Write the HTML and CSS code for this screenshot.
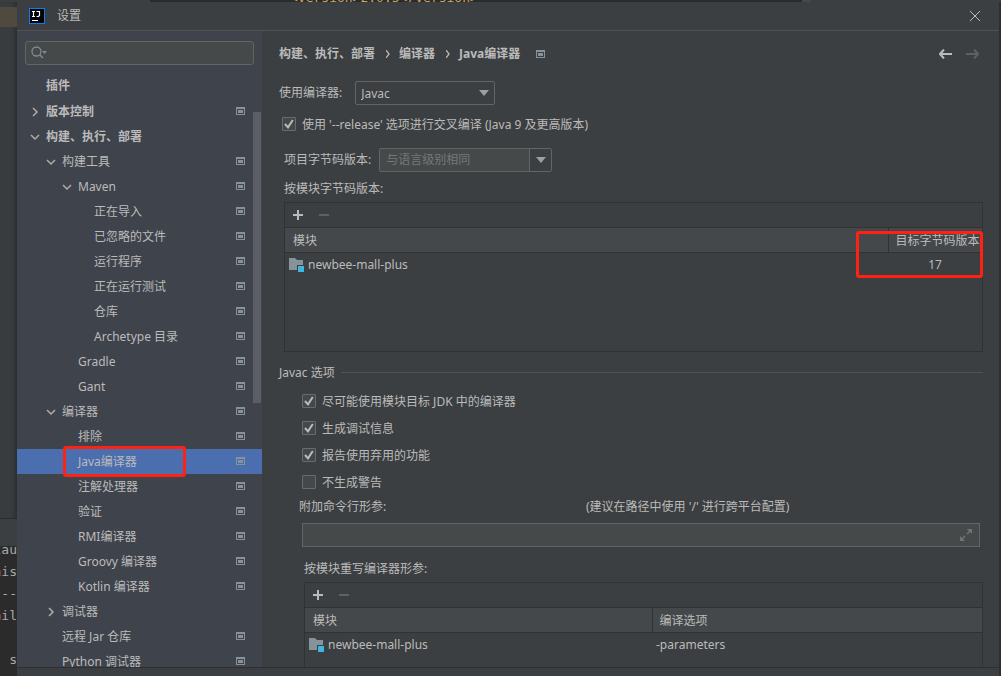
FILE: index.html
```html
<!DOCTYPE html>
<html lang="zh-CN">
<head>
<meta charset="utf-8">
<meta name="viewport" content="width=device-width, initial-scale=1">
<title>设置</title>
<link rel="stylesheet" href="styles.css">
</head>
<body>
<svg class="defs" aria-hidden="true">
  <symbol id="project" viewBox="0 0 9 8"><path fill-rule="evenodd" d="M0 0h9v8H0zM1 2v5h7V2zM2 3h5v3H2z"/></symbol>
  <symbol id="down" viewBox="0 0 16 16"><path d="M4 6l4 4 4-4" fill="none" stroke="currentColor" stroke-width="1.5"/></symbol>
  <symbol id="right" viewBox="0 0 16 16"><path d="M6 4l4 4-4 4" fill="none" stroke="currentColor" stroke-width="1.5"/></symbol>
  <symbol id="tick" viewBox="0 0 14 14"><path d="M3 7l3 3.4L10.8 3" fill="none" stroke="currentColor" stroke-width="2"/></symbol>
  <symbol id="arrow" viewBox="0 0 10 6"><path d="M0 0h10L5 6z"/></symbol>
  <symbol id="plus" viewBox="0 0 10 10"><path d="M4 0h2v4h4v2H6v4H4V6H0V4h4z"/></symbol>
  <symbol id="minus" viewBox="0 0 10 10"><path d="M0 4h10v2H0z"/></symbol>
  <symbol id="module" viewBox="0 0 16 14"><path d="M0 0h6l2 2h6v5H8v5H0z" fill="#87939a"/><path d="M9 8h6v6H9z" fill="#40b6e0"/></symbol>
</svg>
<div class="topstrip" aria-hidden="true"><span class="toptext">&lt;version&gt;2.0.5&lt;/version&gt;</span></div>
<div class="desktop">
  <div class="editor" aria-hidden="true">
    <div class="tab"></div>
    <div class="tool"></div>
    <div class="console"><p>tau</p><p><i>n</i>is</p><p>---</p><p><i>a</i>il</p><p>&nbsp;</p><p><i>)</i> s</p></div>
  </div>
  <div class="dialog" role="dialog" aria-labelledby="title">
    <header class="titlebar">
      <svg class="logo" viewBox="0 0 16 16" aria-hidden="true"><path fill="#087cfa" d="M0 0h16v16H0z"/><path fill="#000" d="M1 1h14v14H1z"/><path d="M3 3.5h3M4.500 3.500v5M3 8.500h3M7.500 3.500h3v4l-1 1H7.500M3 12.500h6" fill="none" stroke="#fff" stroke-width="1.200"/></svg>
      <h1 id="title">设置</h1>
      <button class="close" aria-label="关闭"><svg viewBox="0 0 10 10"><path d="M0 0l10 10M10 0L0 10" stroke="currentColor"/></svg></button>
    </header>
    <div class="content">
      <nav class="sidebar">
        <div class="search">
          <svg class="glass" viewBox="0 0 17 14" aria-hidden="true"><circle cx="5.500" cy="5.500" r="4.500" fill="none" stroke="currentColor" stroke-width="1.300"/><path d="M9 9l3 3" stroke="currentColor" stroke-width="1.500"/><path d="M11 5h5l-2.500 3z" fill="currentColor"/></svg>
          <input type="text" aria-label="搜索">
        </div>
        <ul class="tree">
          <li class="row l0 first bold"><i class="tw"></i><span>插件</span></li>
          <li class="row l0 bold"><svg class="tw"><use href="#right"/></svg><span>版本控制</span><svg class="pj"><use href="#project"/></svg></li>
          <li class="row l0 bold"><svg class="tw"><use href="#down"/></svg><span>构建、执行、部署</span></li>
          <li class="row l1"><svg class="tw"><use href="#down"/></svg><span>构建工具</span><svg class="pj"><use href="#project"/></svg></li>
          <li class="row l2"><svg class="tw"><use href="#down"/></svg><span>Maven</span><svg class="pj"><use href="#project"/></svg></li>
          <li class="row l3"><i class="tw"></i><span>正在导入</span><svg class="pj"><use href="#project"/></svg></li>
          <li class="row l3"><i class="tw"></i><span>已忽略的文件</span><svg class="pj"><use href="#project"/></svg></li>
          <li class="row l3"><i class="tw"></i><span>运行程序</span><svg class="pj"><use href="#project"/></svg></li>
          <li class="row l3"><i class="tw"></i><span>正在运行测试</span><svg class="pj"><use href="#project"/></svg></li>
          <li class="row l3"><i class="tw"></i><span>仓库</span><svg class="pj"><use href="#project"/></svg></li>
          <li class="row l3"><i class="tw"></i><span>Archetype 目录</span><svg class="pj"><use href="#project"/></svg></li>
          <li class="row l2"><i class="tw"></i><span>Gradle</span><svg class="pj"><use href="#project"/></svg></li>
          <li class="row l2"><i class="tw"></i><span>Gant</span><svg class="pj"><use href="#project"/></svg></li>
          <li class="row l1"><svg class="tw"><use href="#down"/></svg><span>编译器</span><svg class="pj"><use href="#project"/></svg></li>
          <li class="row l2"><i class="tw"></i><span>排除</span><svg class="pj"><use href="#project"/></svg></li>
          <li class="row l2 selected"><i class="tw"></i><span>Java编译器</span><svg class="pj"><use href="#project"/></svg><b class="mark mark-tree"></b></li>
          <li class="row l2"><i class="tw"></i><span>注解处理器</span><svg class="pj"><use href="#project"/></svg></li>
          <li class="row l2"><i class="tw"></i><span>验证</span><svg class="pj"><use href="#project"/></svg></li>
          <li class="row l2"><i class="tw"></i><span>RMI编译器</span><svg class="pj"><use href="#project"/></svg></li>
          <li class="row l2"><i class="tw"></i><span>Groovy 编译器</span><svg class="pj"><use href="#project"/></svg></li>
          <li class="row l2"><i class="tw"></i><span>Kotlin 编译器</span><svg class="pj"><use href="#project"/></svg></li>
          <li class="row l1"><svg class="tw"><use href="#right"/></svg><span>调试器</span></li>
          <li class="row l1"><i class="tw"></i><span>远程 Jar 仓库</span><svg class="pj"><use href="#project"/></svg></li>
          <li class="row l1"><i class="tw"></i><span>Python 调试器</span><svg class="pj"><use href="#project"/></svg></li>
        </ul>
        <div class="scrollbar"></div>
      </nav>
      <main class="page">
        <div class="crumbs">
          <span>构建、执行、部署</span>
          <svg class="sep" viewBox="0 0 4 8"><path d="M0 0l3 4-3 4" fill="none" stroke="currentColor" stroke-width="1.300"/></svg>
          <span>编译器</span>
          <svg class="sep" viewBox="0 0 4 8"><path d="M0 0l3 4-3 4" fill="none" stroke="currentColor" stroke-width="1.300"/></svg>
          <span>Java编译器</span>
          <svg class="pj"><use href="#project"/></svg>
          <div class="history">
            <button aria-label="后退"><svg viewBox="0 0 13 10"><path d="M13 5H1M5 .5L1 5l4 4.500" fill="none" stroke="currentColor" stroke-width="2"/></svg></button>
            <button aria-label="前进" disabled><svg viewBox="0 0 13 10"><path d="M0 5h12M8 .5L12 5 8 9.500" fill="none" stroke="currentColor" stroke-width="2"/></svg></button>
          </div>
        </div>
        <div class="field compiler">
          <label for="compiler">使用编译器:</label>
          <div class="select"><select id="compiler"><option>Javac</option></select><svg class="caret"><use href="#arrow"/></svg></div>
        </div>
        <label class="check cross"><span class="box"><input type="checkbox" checked><svg><use href="#tick"/></svg></span>使用 '--release' 选项进行交叉编译 (Java 9 及更高版本)</label>
        <section class="bytecode">
          <div class="field">
            <label for="level">项目字节码版本:</label>
            <div class="combo"><input id="level" type="text" placeholder="与语言级别相同"><button aria-label="展开"><svg class="caret"><use href="#arrow"/></svg></button></div>
          </div>
          <h2>按模块字节码版本:</h2>
          <div class="panel targets">
            <div class="toolbar"><button aria-label="添加"><svg><use href="#plus"/></svg></button><button aria-label="移除" disabled><svg><use href="#minus"/></svg></button></div>
            <table>
              <colgroup><col><col class="target"></colgroup>
              <thead><tr><th>模块</th><th>目标字节码版本</th></tr></thead>
              <tbody><tr><td><div class="module"><svg><use href="#module"/></svg>newbee-mall-plus</div></td><td class="num">17</td></tr></tbody>
            </table>
            <b class="mark mark-table"></b>
          </div>
        </section>
        <section>
          <h2 class="group">Javac 选项</h2>
          <div class="options">
            <label class="check"><span class="box"><input type="checkbox" checked><svg><use href="#tick"/></svg></span>尽可能使用模块目标 JDK 中的编译器</label>
            <label class="check"><span class="box"><input type="checkbox" checked><svg><use href="#tick"/></svg></span>生成调试信息</label>
            <label class="check"><span class="box"><input type="checkbox" checked><svg><use href="#tick"/></svg></span>报告使用弃用的功能</label>
            <label class="check"><span class="box"><input type="checkbox"><svg><use href="#tick"/></svg></span>不生成警告</label>
          </div>
          <div class="argline"><label for="args">附加命令行形参:</label><span>(建议在路径中使用 '/' 进行跨平台配置)</span></div>
          <div class="args">
            <input id="args" type="text">
            <svg viewBox="0 0 12 12" aria-hidden="true"><path d="M7 0h5v5l-2-2-2.500 2.500-1-1L9 2zM0 7l2 2 2.500-2.500 1 1L3 10l2 2H0z"/></svg>
          </div>
          <div class="override">
            <h2>按模块重写编译器形参:</h2>
            <div class="panel">
              <div class="toolbar"><button aria-label="添加"><svg><use href="#plus"/></svg></button><button aria-label="移除" disabled><svg><use href="#minus"/></svg></button></div>
              <table>
                <colgroup><col class="names"><col></colgroup>
                <thead><tr><th>模块</th><th>编译选项</th></tr></thead>
                <tbody><tr><td><div class="module"><svg><use href="#module"/></svg>newbee-mall-plus</div></td><td>-parameters</td></tr></tbody>
              </table>
            </div>
          </div>
        </section>
      </main>
    </div>
    <footer class="footer"></footer>
  </div>
  <div class="edge"></div>
</div>
</body>
</html>
```
FILE: styles.css
```css
* { box-sizing: border-box; }
body {
  margin: 0;
  height: 100vh;
  display: flex;
  flex-direction: column;
  overflow: hidden;
  background: #3c3f41;
  color: #bbbbbb;
  font: 12px/18px "Noto Sans", "Noto Sans CJK SC", sans-serif;
}
h1, h2, p, ul { margin: 0; padding: 0; font-size: 12px; font-weight: 400; }
button { padding: 0; border: 0; background: none; color: inherit; display: grid; place-items: center; }
input, select { font: inherit; color: inherit; margin: 0; }
svg { display: block; fill: currentColor; flex: none; }
.defs { display: none; }

.topstrip {
  height: 2px;
  flex: none;
  overflow: hidden;
  display: flex;
  align-items: flex-end;
  padding-left: 290px;
  background: linear-gradient(90deg, #3c3f41 150px, #2b2b2b 150px, #2b2b2b 802px, #45484a 802px, #45484a 811px, #3c3f41 811px);
}
.toptext { margin-bottom: -3px; font: 13px/14px "DejaVu Sans Mono", monospace; color: #c9a566; }
.desktop { flex: 1; min-height: 0; display: flex; }
.editor {
  width: 17px;
  flex: none;
  display: flex;
  flex-direction: column;
  overflow: hidden;
  padding-top: 5px;
  background: #393c3e;
}
.tab { height: 20px; flex: none; background: #4f4a3f; }
.tool { height: 519px; flex: none; border-bottom: 27px solid #3c3f41; box-shadow: inset 0 -1px #292b2c; }
.console {
  flex: 1;
  min-height: 0;
  overflow: hidden;
  display: flex;
  flex-direction: column;
  align-items: flex-end;
  justify-content: flex-start;
  background: #2b2b2b;
  color: #a5a8ab;
  font: 13px/22px "DejaVu Sans Mono", monospace;
}
.console p { font-size: 13px; white-space: nowrap; }
.console p:first-child { margin-top: -7px; }
.console i { font-style: normal; color: #b8794a; }
.edge { width: 2px; flex: none; background: #2d3032; }

.dialog { flex: 1; min-width: 0; display: flex; flex-direction: column; background: #3c3f41; }
.editor { box-shadow: inset -4px 0 4px -2px #2a2c2d; }
.titlebar {
  height: 29px;
  flex: none;
  display: flex;
  align-items: center;
  gap: 12px;
  padding: 0 19px 0 12px;
  border-bottom: 1px solid #515151;
}
.logo { width: 16px; height: 16px; }
.close { margin-left: auto; }
.close svg { width: 10px; height: 10px; }
.content { flex: 1; min-height: 0; display: flex; overflow: hidden; }
.footer { height: 9px; flex: none; border-top: 1px solid #2d2f30; }

.sidebar { width: 245px; flex: none; position: relative; overflow: hidden; background: #3f434c; padding-top: 10px; }
.search {
  height: 24px;
  margin: 0 8px 7px;
  display: flex;
  align-items: center;
  gap: 4px;
  padding: 0 5px;
  border: 1px solid #646464;
  border-radius: 3px;
  background: #45494a;
}
.search input { flex: 1; min-width: 0; border: 0; outline: 0; background: none; }
.glass { width: 17px; height: 14px; color: #7f8b91; }
.tree { list-style: none; }
.row { position: relative; height: 25px; display: flex; align-items: center; gap: 3px; padding-right: 17px; }
.first { height: 27px; }
.l0 { padding-left: 10px; }
.l1 { padding-left: 26px; }
.l2 { padding-left: 42px; }
.l3 { padding-left: 58px; }
.bold { font-weight: 700; }
.tw { width: 16px; height: 16px; color: #adadad; }
.pj { width: 9px; height: 8px; color: #87939a; }
.row .pj { margin: 0 0 1px auto; }
.selected { background: #4b6eaf; }
.scrollbar { position: absolute; top: 81px; right: 1px; width: 8px; height: 291px; background: #5b5e66; }
.mark { position: absolute; border: 3px solid #ff2214; border-radius: 3px; pointer-events: none; }
.mark-tree { left: 46px; top: -3px; width: 123px; height: 31px; }
.mark-table { right: -1px; top: 28px; width: 127px; height: 47px; }

.page { flex: 1; min-width: 0; padding: 12px 16px 0 17px; }
.crumbs { height: 22px; display: flex; align-items: center; gap: 11px; font-weight: 700; }
.sep { width: 4px; height: 8px; margin-right: -2px; }
.crumbs .pj { margin-left: 5px; }
.history { margin-left: auto; display: flex; gap: 14px; padding-right: 4px; }
.history svg { width: 13px; height: 10px; }
button:disabled { color: #5e6062; }
.field { height: 24px; display: flex; align-items: center; }
.compiler { margin-top: 16px; gap: 13px; }
.select { position: relative; width: 140px; height: 24px; }
.select select {
  width: 100%;
  height: 100%;
  appearance: none;
  padding: 2px 5px 0;
  border: 1px solid #646464;
  border-radius: 2px;
  background: #3c3f41;
}
.caret { width: 10px; height: 6px; color: #9da0a2; }
.select .caret { position: absolute; right: 6px; top: 9px; pointer-events: none; }
.check { display: flex; align-items: center; gap: 6px; height: 20px; }
.cross { margin: 10px 0 13px 3px; }
.box { display: grid; width: 14px; height: 14px; margin-bottom: 2px; }
.box > * { grid-area: 1 / 1; width: 14px; height: 14px; }
.box input { appearance: none; border: 1px solid #6b6b6b; border-radius: 1px; background: #43494a; }
.box svg { visibility: hidden; pointer-events: none; }
.box input:checked + svg { visibility: visible; }

.bytecode { margin-left: 5px; }
.bytecode .field { gap: 8px; }
.bytecode h2 { margin: 8px 0 4px; }
.combo { width: 173px; height: 24px; display: flex; border: 1px solid #646464; border-radius: 2px; background: #45494a; }
.combo input { flex: 1; min-width: 0; padding: 0 6px; border: 0; background: none; }
.combo input::placeholder { color: #777777; opacity: 1; }
.combo button { width: 22px; border-left: 1px solid #646464; background: #3c3f41; }

.panel { position: relative; border: 1px solid #323232; }
.targets { height: 150px; }
.toolbar { height: 24px; display: flex; align-items: center; gap: 16px; padding: 0 8px; }
.toolbar svg { width: 10px; height: 10px; }
table { width: 100%; table-layout: fixed; border-collapse: collapse; }
th, td { padding: 0; font-weight: 400; text-align: left; white-space: nowrap; height: 25px; }
thead tr { background: #45484a; border-top: 1px solid #323232; border-bottom: 1px solid #323232; }
th { padding: 2px 0 0 8px; }
th + th { padding-left: 7px; border-left: 1px solid #323232; }
td { padding-left: 4px; }
.target { width: 94px; }
.num { padding: 0; text-align: center; }
.module { display: flex; align-items: center; gap: 3px; }
.module svg { width: 16px; height: 14px; }

.group { display: flex; align-items: center; gap: 6px; margin-top: 12px; }
.group::after { content: ""; flex: 1; margin-bottom: 2px; border-top: 1px solid #515151; }
.options { margin: 10px 0 0 23px; display: grid; gap: 7px; }
.argline { margin: 5px 0 7px 20px; display: grid; grid-template-columns: 287px 1fr; }
.args {
  height: 24px;
  margin: 0 3px 13px 23px;
  display: flex;
  align-items: center;
  padding-right: 7px;
  border: 1px solid #646464;
  background: #45494a;
}
.args input { flex: 1; min-width: 0; border: 0; background: none; }
.args svg { width: 12px; height: 12px; color: #6c7478; }
.override { margin-left: 25px; }
.override h2 { margin-bottom: 4px; }
.override .panel { height: 100px; }
.names { width: 347px; }
```
